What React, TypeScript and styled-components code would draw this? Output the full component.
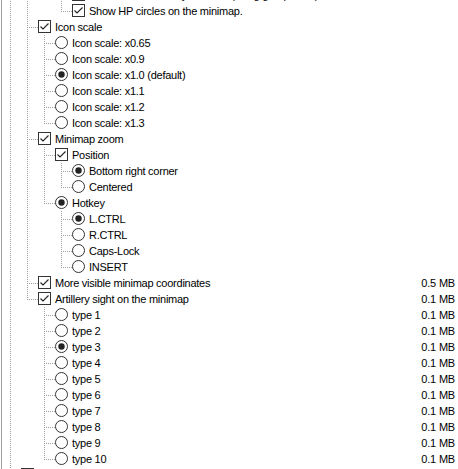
import { useLayoutEffect, useRef } from "react";
import styled, { createGlobalStyle } from "styled-components";

interface TreeNode {
  label: string;
  kind: "check" | "radio";
  checked?: boolean;
  size?: string;
  children?: TreeNode[];
}

type GuideType = "line" | "tee" | "elbow" | "none";

const types = Array.from({ length: 10 }, (_, i) => ({
  label: `type ${i + 1}`,
  kind: "radio" as const,
  checked: i === 2,
  size: "0.1 MB",
}));

const tree: TreeNode[] = [
  {
    label: "Minimap",
    kind: "check",
    checked: true,
    children: [
      {
        label: "HP display",
        kind: "check",
        checked: true,
        children: [
          {
            label: "HP circles",
            kind: "check",
            checked: true,
            children: [
              { label: "Show HP circles only for allies (using group color)", kind: "check", checked: true },
              { label: "Show HP circles on the minimap.", kind: "check", checked: true },
            ],
          },
        ],
      },
      {
        label: "Icon scale",
        kind: "check",
        checked: true,
        children: [
          { label: "Icon scale: x0.65", kind: "radio" },
          { label: "Icon scale: x0.9", kind: "radio" },
          { label: "Icon scale: x1.0 (default)", kind: "radio", checked: true },
          { label: "Icon scale: x1.1", kind: "radio" },
          { label: "Icon scale: x1.2", kind: "radio" },
          { label: "Icon scale: x1.3", kind: "radio" },
        ],
      },
      {
        label: "Minimap zoom",
        kind: "check",
        checked: true,
        children: [
          {
            label: "Position",
            kind: "check",
            checked: true,
            children: [
              { label: "Bottom right corner", kind: "radio", checked: true },
              { label: "Centered", kind: "radio" },
            ],
          },
          {
            label: "Hotkey",
            kind: "radio",
            checked: true,
            children: [
              { label: "L.CTRL", kind: "radio", checked: true },
              { label: "R.CTRL", kind: "radio" },
              { label: "Caps-Lock", kind: "radio" },
              { label: "INSERT", kind: "radio" },
            ],
          },
        ],
      },
      { label: "More visible minimap coordinates", kind: "check", checked: true, size: "0.5 MB" },
      {
        label: "Artillery sight on the minimap",
        kind: "check",
        checked: true,
        size: "0.1 MB",
        children: types,
      },
    ],
  },
  { label: "Damage panel", kind: "check" },
  { label: "Crosshair", kind: "check" },
];

const GlobalStyle = createGlobalStyle`
  html, body {
    margin: 0;
    padding: 0;
    background: #fff;
  }
  body {
    font-family: "Liberation Sans", Arial, sans-serif;
    font-size: 11px;
    color: #000;
  }
`;

const Viewport = styled.div`
  height: 469px;
  margin-left: 1px;
  padding-left: 2px;
  border-left: 1px solid #a0a0a0;
  overflow: hidden;
  background: #fff;
`;

const Row = styled.div`
  display: flex;
  align-items: flex-start;
  height: 16px;
  padding-right: 3px;
`;

const V = "repeating-linear-gradient(to bottom, #a0a0a0 0 1px, transparent 1px 2px)";
const H = "repeating-linear-gradient(to right, #a0a0a0 0 1px, transparent 1px 2px)";

const guideBg: Record<GuideType, string> = {
  none: "none",
  line: `${V} 6px 0 / 1px 16px no-repeat`,
  tee: `${V} 6px 0 / 1px 16px no-repeat, ${H} 8px 8px / 9px 1px no-repeat`,
  elbow: `${V} 6px 0 / 1px 9px no-repeat, ${H} 8px 8px / 9px 1px no-repeat`,
};

const Guide = styled.span<{ $type: GuideType }>`
  flex: none;
  width: 17px;
  height: 16px;
  background: ${(p) => guideBg[p.$type]};
`;

const Mark = styled.svg`
  flex: none;
  width: 13px;
  height: 13px;
  margin-top: 1px;
`;

const Label = styled.span`
  margin-left: 4px;
  line-height: 16px;
  letter-spacing: -0.25px;
  white-space: nowrap;
`;

const Size = styled.span`
  margin-left: auto;
  line-height: 16px;
  letter-spacing: -0.2px;
  white-space: nowrap;
`;

function CheckMark({ checked }: { checked?: boolean }) {
  return (
    <Mark viewBox="0 0 13 13">
      <rect x="0.5" y="0.5" width="12" height="12" fill="#fff" stroke="#333" />
      {checked && (
        <polyline points="2.5,6.5 5,9 10.5,3.5" fill="none" stroke="#222" strokeWidth="1.1" />
      )}
    </Mark>
  );
}

function RadioMark({ checked }: { checked?: boolean }) {
  return (
    <Mark viewBox="0 0 13 13">
      <circle cx="6.5" cy="6.5" r="6" fill="#fff" stroke="#333" />
      {checked && <circle cx="6.5" cy="6.5" r="3.2" fill="#222" />}
    </Mark>
  );
}

function TreeRow({ node, guides }: { node: TreeNode; guides: GuideType[] }) {
  return (
    <Row>
      {guides.map((g, i) => (
        <Guide key={i} $type={g} />
      ))}
      {node.kind === "check" ? <CheckMark checked={node.checked} /> : <RadioMark checked={node.checked} />}
      <Label>{node.label}</Label>
      {node.size && <Size>{node.size}</Size>}
    </Row>
  );
}

function renderRows(nodes: TreeNode[], open: boolean[], path: string, out: JSX.Element[]) {
  nodes.forEach((node, i) => {
    const last = i === nodes.length - 1;
    const guides: GuideType[] = [...open.map((o) => (o ? "line" : "none") as GuideType), last ? "elbow" : "tee"];
    const key = `${path}/${i}`;
    out.push(<TreeRow key={key} node={node} guides={guides} />);
    if (node.children) renderRows(node.children, [...open, !last], key, out);
  });
  return out;
}

export default function App() {
  const ref = useRef<HTMLDivElement>(null);

  // the tree is scrolled down to the minimap options
  useLayoutEffect(() => {
    if (ref.current) ref.current.scrollTop = 61;
  }, []);

  return (
    <>
      <GlobalStyle />
      <Viewport ref={ref}>{renderRows(tree, [], "", [])}</Viewport>
    </>
  );
}
